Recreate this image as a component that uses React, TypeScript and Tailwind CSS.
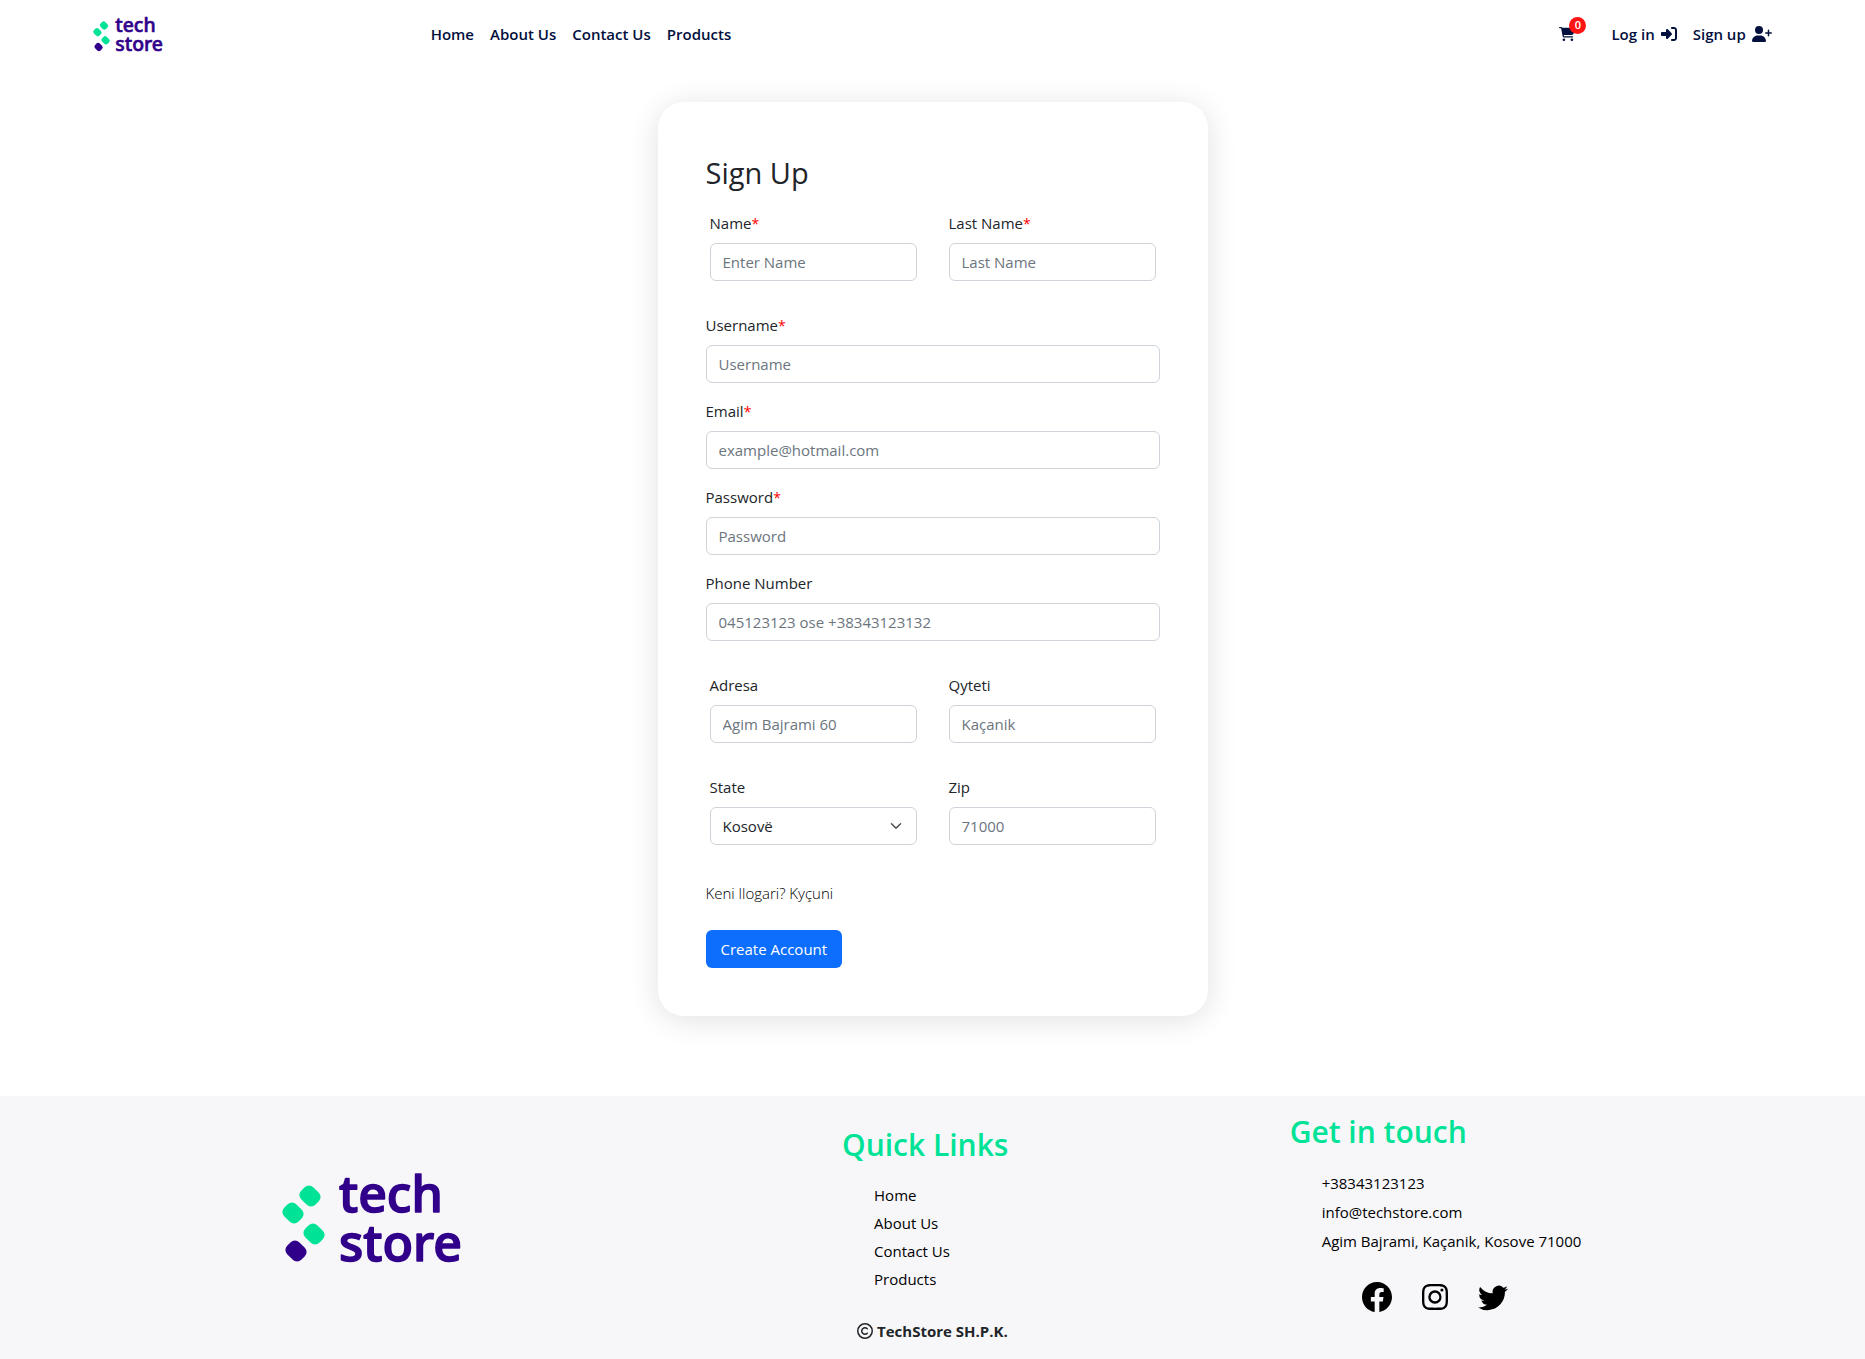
import React from 'react';
import { FaCartShopping, FaRightToBracket, FaUserPlus, FaRegCopyright } from 'react-icons/fa6';
import { BsFacebook, BsInstagram, BsTwitter, BsChevronDown } from 'react-icons/bs';

function Logo({ className }: { className: string }) {
  return (
    <svg viewBox="0 0 182 90" className={`overflow-visible ${className}`} role="img" aria-label="tech store">
      <g fill="#00e396">
        <rect x="-10" y="-8.5" width="20" height="17" rx="6" transform="translate(28 22) rotate(45)" />
        <rect x="-10" y="-8.5" width="20" height="17" rx="6" transform="translate(11 39) rotate(45)" />
        <rect x="-10" y="-8.5" width="20" height="17" rx="6" transform="translate(32 60) rotate(45)" />
      </g>
      <rect x="-10" y="-8.5" width="20" height="17" rx="6" fill="#31008a" transform="translate(14 77) rotate(45)" />
      <g
        fill="#31008a"
        stroke="#31008a"
        strokeWidth="1.6"
        strokeLinejoin="round"
        fontFamily='"Noto Sans", "Open Sans", sans-serif'
        fontWeight="500"
        fontSize="50"
      >
        <text x="57" y="38">tech</text>
        <text x="57" y="87">store</text>
      </g>
    </svg>
  );
}

const control =
  'h-[38px] w-full rounded-md border border-[#ced4da] bg-white px-3 text-[15px] text-[#212529] placeholder:text-[#6c757d]';

type FieldProps = {
  id: string;
  label: string;
  placeholder?: string;
  type?: string;
  required?: boolean;
  children?: React.ReactNode;
};

function Field({ id, label, placeholder, type = 'text', required, children }: FieldProps) {
  return (
    <div className="flex flex-col gap-2">
      <label htmlFor={id} className="leading-6">
        {label}
        {required && <span className="text-sm text-[#ff0000]">*</span>}
      </label>
      {children ?? <input id={id} type={type} placeholder={placeholder} className={control} />}
    </div>
  );
}

function Pair({ children }: { children: React.ReactNode }) {
  return <div className="grid grid-cols-2 gap-8 px-1">{children}</div>;
}

const pages = ['Home', 'About Us', 'Contact Us', 'Products'];

export default function App() {
  return (
    <div className="flex min-h-screen flex-col bg-white font-['Open_Sans','Noto_Sans',sans-serif] text-[15px] text-[#212529]">
      <header className="flex h-[68px] items-center px-[5%] font-semibold text-[#02103d]">
        <a href="#" className="w-[20.1%] shrink-0 grow-0">
          <Logo className="h-[35px] w-[71px]" />
        </a>
        <nav className="flex gap-4">
          {pages.map((p) => (
            <a key={p} href="#">{p}</a>
          ))}
        </nav>
        <div className="ml-auto flex items-center gap-4">
          <a href="#" aria-label="Cart" className="relative mr-5 text-base">
            <FaCartShopping />
            <span className="absolute -top-[9px] left-[10px] flex size-[17px] items-center justify-center rounded-full bg-[#ff1414] text-[11px] text-white">
              0
            </span>
          </a>
          <a href="#" className="flex items-center gap-1.5">Log in <FaRightToBracket className="text-base" /></a>
          <a href="#" className="flex items-center gap-1.5">Sign up <FaUserPlus className="text-xl" /></a>
        </div>
      </header>

      <main className="flex justify-center px-4 pt-[34px] pb-20">
        <form className="flex w-full max-w-[550px] flex-col rounded-[26px] bg-white p-12 shadow-[0_4px_30px_rgba(0,0,0,0.12)]">
          <h1 className="mb-4 text-[29px] leading-[45px]">Sign Up</h1>
          <Pair>
            <Field id="name" label="Name" placeholder="Enter Name" required />
            <Field id="last" label="Last Name" placeholder="Last Name" required />
          </Pair>
          <div className="my-8 flex flex-col gap-4">
            <Field id="username" label="Username" placeholder="Username" required />
            <Field id="email" label="Email" type="email" placeholder="example@hotmail.com" required />
            <Field id="password" label="Password" type="password" placeholder="Password" required />
            <Field id="phone" label="Phone Number" type="tel" placeholder="045123123 ose +38343123132" />
          </div>
          <div className="flex flex-col gap-8">
            <Pair>
              <Field id="address" label="Adresa" placeholder="Agim Bajrami 60" />
              <Field id="city" label="Qyteti" placeholder="Kaçanik" />
            </Pair>
            <Pair>
              <Field id="state" label="State">
                <div className="relative">
                  <select id="state" className={`${control} appearance-none`}>
                    <option>Kosovë</option>
                  </select>
                  <BsChevronDown className="pointer-events-none absolute top-[13px] right-[15px] size-3 stroke-1 text-[#343a40]" />
                </div>
              </Field>
              <Field id="zip" label="Zip" placeholder="71000" />
            </Pair>
          </div>
          <a href="#" className="mt-9 mb-[25px] self-start leading-6 font-light text-black">
            Keni llogari? Kyçuni
          </a>
          <button type="button" className="h-[38px] self-start rounded-md bg-[#0d6efd] px-[15px] text-white">
            Create Account
          </button>
        </form>
      </main>

      <footer className="grow bg-[#f7f7fa] text-black">
        <div className="grid grid-cols-[45.15%_24%_1fr]">
          <div className="pt-[78px] pl-[33.5%]">
            <Logo className="h-[90px] w-[182px]" />
          </div>
          <div className="pt-[25px]">
            <h2 className="text-[30px] leading-[48px] font-semibold text-[#00e396]">Quick Links</h2>
            <ul className="mt-3 pl-8 leading-7">
              {pages.map((p) => (
                <li key={p}><a href="#">{p}</a></li>
              ))}
            </ul>
            <p className="mt-[26px] flex items-center gap-1 pl-[15px] leading-6 font-bold text-[#212529]">
              <FaRegCopyright className="text-base" /> TechStore SH.P.K.
            </p>
          </div>
          <div className="pt-3">
            <h2 className="text-[30px] leading-[48px] font-semibold text-[#00e396]">Get in touch</h2>
            <ul className="mt-[13px] pl-8 leading-[29px]">
              <li>+38343123123</li>
              <li>info@techstore.com</li>
              <li>Agim Bajrami, Kaçanik, Kosove 71000</li>
            </ul>
            <div className="mt-[26px] flex items-center gap-[30px] pl-[72px]">
              <a href="#" aria-label="Facebook"><BsFacebook className="size-[30px]" /></a>
              <a href="#" aria-label="Instagram"><BsInstagram className="size-[26px]" /></a>
              <a href="#" aria-label="Twitter"><BsTwitter className="size-[30px]" /></a>
            </div>
          </div>
        </div>
      </footer>
    </div>
  );
}
